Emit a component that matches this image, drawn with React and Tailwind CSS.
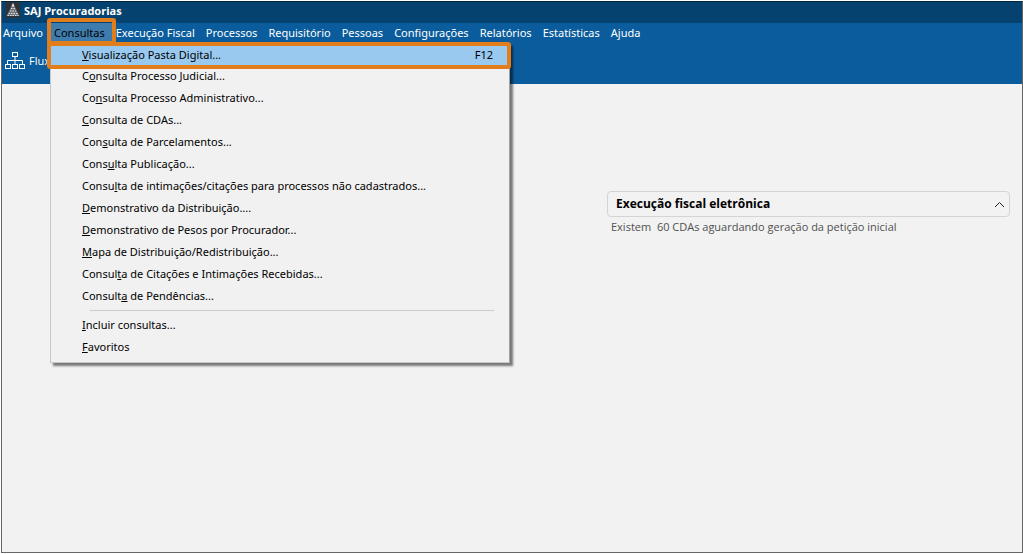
import React, { useState } from 'react';

const menus = ['Arquivo', 'Consultas', 'Execução Fiscal', 'Processos', 'Requisitório', 'Pessoas', 'Configurações', 'Relatórios', 'Estatísticas', 'Ajuda'];

// "key" is the position of the underlined access key in the label
const consultas = [
  { label: 'Visualização Pasta Digital...', key: 0, shortcut: 'F12' },
  { label: 'Consulta Processo Judicial...', key: 1 },
  { label: 'Consulta Processo Administrativo...', key: 2 },
  { label: 'Consulta de CDAs...', key: 0 },
  { label: 'Consulta de Parcelamentos...', key: 3 },
  { label: 'Consulta Publicação...', key: 4 },
  { label: 'Consulta de intimações/citações para processos não cadastrados...', key: 5 },
  { label: 'Demonstrativo da Distribuição....', key: 0 },
  { label: 'Demonstrativo de Pesos por Procurador...', key: 0 },
  { label: 'Mapa de Distribuição/Redistribuição...', key: 0 },
  { label: 'Consulta de Citações e Intimações Recebidas...', key: 6 },
  { label: 'Consulta de Pendências...', key: 7 },
];

const extras = [
  { label: 'Incluir consultas...', key: 0 },
  { label: 'Favoritos', key: 0 },
];

const AppLogo = () => (
  <svg width="14" height="16" viewBox="0 0 14 16" aria-hidden="true">
    <rect width="14" height="16" fill="#2f3237" />
    <path d="M7 1L13.500 14H0.500Z" fill="#6f7377" />
    <path d="M7 1L8.500 4.500H5.500Z" fill="#e8eaec" />
    <path d="M5 6.500H9M4 9H10M2.500 11.500H11.500M1.500 13.500H12.500" stroke="#e0e2e4" strokeWidth="1.2" strokeDasharray="1.500 1" fill="none" />
  </svg>
);

const FlowIcon = () => (
  <svg width="20" height="18" viewBox="0 0 20 18" fill="none" stroke="#fff" strokeWidth="1" aria-hidden="true">
    <rect x="7.500" y="0.500" width="5" height="4" />
    <rect x="0.500" y="12.500" width="5" height="4" />
    <rect x="7.500" y="12.500" width="5" height="4" />
    <rect x="14.500" y="12.500" width="5" height="4" />
    <path d="M10 5V12M2.500 12V8.500H17.500V12" />
  </svg>
);

const MenuItem = ({ item, active }) => (
  <li role="none">
    <button role="menuitem" className={`flex w-full items-center justify-between pl-[31px] pr-4 text-left whitespace-nowrap ${active ? 'h-[21px] bg-[#99c9ef]' : 'h-[22px] hover:bg-[#99c9ef]'}`}>
      <span>
        {item.label.slice(0, item.key)}
        <u className="underline-offset-1">{item.label[item.key]}</u>
        {item.label.slice(item.key + 1)}
      </span>
      {item.shortcut && <span>{item.shortcut}</span>}
    </button>
  </li>
);

const ConsultasMenu = () => (
  <div className="absolute left-[2px] top-full z-10 w-[460px] border border-[#c8c8c8] border-r-[#a0a0a0] bg-[#f1f1f1] pb-1 text-black shadow-[3px_3px_2px_rgba(0,0,0,0.5)]">
    <ul role="menu">
      {consultas.map((item, i) => <MenuItem key={item.label} item={item} active={i === 0} />)}
    </ul>
    <hr className="mt-[3px] mb-[3px] ml-[39px] mr-[15px] border-[#cbcbcb]" />
    <ul role="menu">
      {extras.map((item) => <MenuItem key={item.label} item={item} />)}
    </ul>
    <div className="pointer-events-none absolute -left-[4px] -right-[2px] -top-[2px] h-[27px] rounded-[3px] border-4 border-[#e27d1b]" />
  </div>
);

export default function App() {
  const [openMenu, setOpenMenu] = useState('Consultas');
  const [expanded, setExpanded] = useState(true);

  return (
    <div className="flex min-h-screen flex-col bg-white pt-px pl-px pb-px font-['Noto_Sans','Open_Sans',sans-serif] text-[11px] leading-4">
      <div className="flex flex-1 flex-col border border-[#666] border-t-[#03263f] bg-[#f2f2f2]">
        <header className="flex h-[21px] items-start gap-1 bg-[#06426f] pl-1 text-white">
          <AppLogo />
          <h1 className="mt-px font-['Open_Sans',sans-serif] font-bold">SAJ Procuradorias</h1>
        </header>

        <nav className="bg-[#0b5c9c] text-white">
          <div className="-ml-[5px] flex h-5">
            {menus.map((name) => (
              <div key={name} className="relative -mr-[3px]">
                <button
                  onClick={() => setOpenMenu(openMenu === name ? '' : name)}
                  className={`h-5 whitespace-nowrap pl-1.5 pr-2 ${openMenu === name ? 'bg-[#3f7cae] text-black' : ''}`}
                >
                  {name}
                </button>
                {name === 'Consultas' && openMenu === name && (
                  <>
                    <ConsultasMenu />
                    <div className="pointer-events-none absolute -left-px -right-[3px] -top-[5px] z-20 h-[27px] rounded-[3px] border-4 border-[#e27d1b]" />
                  </>
                )}
              </div>
            ))}
          </div>
        </nav>

        <div className="flex h-[41px] items-center bg-[#0b5c9c] pb-1.5 pl-[3px] text-white">
          <button className="flex items-center gap-1 font-['Open_Sans',sans-serif]"><FlowIcon /> Fluxo</button>
        </div>

        <main className="flex flex-1 justify-end pt-[107px] pr-3 font-['Open_Sans',sans-serif]">
          <section className="w-[403px]">
            <h2>
              <button
                onClick={() => setExpanded(!expanded)}
                aria-expanded={expanded}
                className="flex h-[26px] w-full items-center justify-between rounded border border-[#d4d4d4] pl-2 pr-1 text-[12px] font-bold text-black"
              >
                Execução fiscal eletrônica
                <svg width="11" height="7" viewBox="0 0 11 7" fill="none" stroke="#222" aria-hidden="true">
                  <path d={expanded ? 'M1 6L5.500 1.500L10 6' : 'M1 1L5.500 5.500L10 1'} />
                </svg>
              </button>
            </h2>
            {expanded && <p className="mt-[2px] pl-1 whitespace-pre text-[#505050]">Existem  60 CDAs aguardando geração da petição inicial</p>}
          </section>
        </main>
      </div>
    </div>
  );
}
